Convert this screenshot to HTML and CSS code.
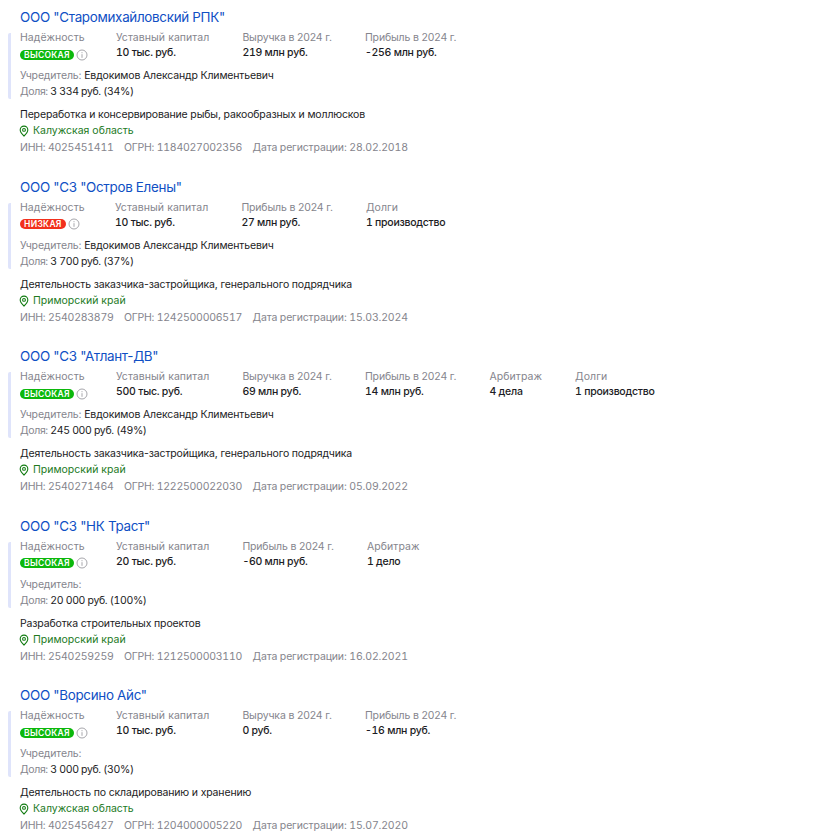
FILE: index.html
```html
<!DOCTYPE html>
<html lang="ru">
<head>
    <meta charset="UTF-8">
    <title>Связанные организации</title>
    <link rel="stylesheet" href="styles.css">
</head>
<body>
    <div class="company">
        <a class="company-title">ООО "Старомихайловский РПК"</a>
        <div class="details">
            <div class="stats">
                <div class="stat stat-rating"><div class="stat-label">Надёжность</div><div class="rating"><span class="badge badge-high">ВЫСОКАЯ</span><svg class="info" viewBox="0 0 12 12"><circle cx="6" cy="6" r="5"/><path d="M6 5.2v3.6M6 3.2v1"/></svg></div></div>
                <div class="stat"><div class="stat-label">Уставный капитал</div><div class="stat-value">10 тыс. руб.</div></div>
                <div class="stat"><div class="stat-label year-label">Выручка в 2024 г.</div><div class="stat-value">219 млн руб.</div></div>
                <div class="stat"><div class="stat-label year-label">Прибыль в 2024 г.</div><div class="stat-value">-256 млн руб.</div></div>
            </div>
            <div class="person"><span class="muted">Учредитель:</span> Евдокимов Александр Климентьевич</div>
            <div class="share"><span class="muted">Доля:</span> 3 334 руб. (34%)</div>
        </div>
        <div class="activity">Переработка и консервирование рыбы, ракообразных и моллюсков</div>
        <div class="region"><svg class="pin" viewBox="0 0 12 12"><path d="M6 11C4 9 2.2 7.2 2.2 4.9a3.8 3.8 0 0 1 7.6 0C9.8 7.2 8 9 6 11z"/><circle cx="6" cy="4.9" r="1.4"/></svg>Калужская область</div>
        <div class="ids"><span>ИНН: 4025451411</span><span>ОГРН: 1184027002356</span><span>Дата регистрации: 28.02.2018</span></div>
    </div>

    <div class="company">
        <a class="company-title">ООО "СЗ "Остров Елены"</a>
        <div class="details">
            <div class="stats">
                <div class="stat stat-rating stat-rating-low"><div class="stat-label">Надёжность</div><div class="rating"><span class="badge badge-low">НИЗКАЯ</span><svg class="info" viewBox="0 0 12 12"><circle cx="6" cy="6" r="5"/><path d="M6 5.2v3.6M6 3.2v1"/></svg></div></div>
                <div class="stat"><div class="stat-label">Уставный капитал</div><div class="stat-value">10 тыс. руб.</div></div>
                <div class="stat"><div class="stat-label year-label">Прибыль в 2024 г.</div><div class="stat-value">27 млн руб.</div></div>
                <div class="stat"><div class="stat-label">Долги</div><div class="stat-value">1 производство</div></div>
            </div>
            <div class="person"><span class="muted">Учредитель:</span> Евдокимов Александр Климентьевич</div>
            <div class="share"><span class="muted">Доля:</span> 3 700 руб. (37%)</div>
        </div>
        <div class="activity">Деятельность заказчика-застройщика, генерального подрядчика</div>
        <div class="region"><svg class="pin" viewBox="0 0 12 12"><path d="M6 11C4 9 2.2 7.2 2.2 4.9a3.8 3.8 0 0 1 7.6 0C9.8 7.2 8 9 6 11z"/><circle cx="6" cy="4.9" r="1.4"/></svg>Приморский край</div>
        <div class="ids"><span>ИНН: 2540283879</span><span>ОГРН: 1242500006517</span><span>Дата регистрации: 15.03.2024</span></div>
    </div>

    <div class="company">
        <a class="company-title">ООО "СЗ "Атлант-ДВ"</a>
        <div class="details">
            <div class="stats">
                <div class="stat stat-rating"><div class="stat-label">Надёжность</div><div class="rating"><span class="badge badge-high">ВЫСОКАЯ</span><svg class="info" viewBox="0 0 12 12"><circle cx="6" cy="6" r="5"/><path d="M6 5.2v3.6M6 3.2v1"/></svg></div></div>
                <div class="stat"><div class="stat-label">Уставный капитал</div><div class="stat-value">500 тыс. руб.</div></div>
                <div class="stat"><div class="stat-label year-label">Выручка в 2024 г.</div><div class="stat-value">69 млн руб.</div></div>
                <div class="stat"><div class="stat-label year-label">Прибыль в 2024 г.</div><div class="stat-value">14 млн руб.</div></div>
                <div class="stat"><div class="stat-label">Арбитраж</div><div class="stat-value">4 дела</div></div>
                <div class="stat"><div class="stat-label">Долги</div><div class="stat-value">1 производство</div></div>
            </div>
            <div class="person"><span class="muted">Учредитель:</span> Евдокимов Александр Климентьевич</div>
            <div class="share"><span class="muted">Доля:</span> 245 000 руб. (49%)</div>
        </div>
        <div class="activity">Деятельность заказчика-застройщика, генерального подрядчика</div>
        <div class="region"><svg class="pin" viewBox="0 0 12 12"><path d="M6 11C4 9 2.2 7.2 2.2 4.9a3.8 3.8 0 0 1 7.6 0C9.8 7.2 8 9 6 11z"/><circle cx="6" cy="4.9" r="1.4"/></svg>Приморский край</div>
        <div class="ids"><span>ИНН: 2540271464</span><span>ОГРН: 1222500022030</span><span>Дата регистрации: 05.09.2022</span></div>
    </div>

    <div class="company">
        <a class="company-title">ООО "СЗ "НК Траст"</a>
        <div class="details">
            <div class="stats">
                <div class="stat stat-rating"><div class="stat-label">Надёжность</div><div class="rating"><span class="badge badge-high">ВЫСОКАЯ</span><svg class="info" viewBox="0 0 12 12"><circle cx="6" cy="6" r="5"/><path d="M6 5.2v3.6M6 3.2v1"/></svg></div></div>
                <div class="stat"><div class="stat-label">Уставный капитал</div><div class="stat-value">20 тыс. руб.</div></div>
                <div class="stat"><div class="stat-label year-label">Прибыль в 2024 г.</div><div class="stat-value">-60 млн руб.</div></div>
                <div class="stat"><div class="stat-label">Арбитраж</div><div class="stat-value">1 дело</div></div>
            </div>
            <div class="person"><span class="muted">Учредитель:</span></div>
            <div class="share"><span class="muted">Доля:</span> 20 000 руб. (100%)</div>
        </div>
        <div class="activity">Разработка строительных проектов</div>
        <div class="region"><svg class="pin" viewBox="0 0 12 12"><path d="M6 11C4 9 2.2 7.2 2.2 4.9a3.8 3.8 0 0 1 7.6 0C9.8 7.2 8 9 6 11z"/><circle cx="6" cy="4.9" r="1.4"/></svg>Приморский край</div>
        <div class="ids"><span>ИНН: 2540259259</span><span>ОГРН: 1212500003110</span><span>Дата регистрации: 16.02.2021</span></div>
    </div>

    <div class="company">
        <a class="company-title">ООО "Ворсино Айс"</a>
        <div class="details">
            <div class="stats">
                <div class="stat stat-rating"><div class="stat-label">Надёжность</div><div class="rating"><span class="badge badge-high">ВЫСОКАЯ</span><svg class="info" viewBox="0 0 12 12"><circle cx="6" cy="6" r="5"/><path d="M6 5.2v3.6M6 3.2v1"/></svg></div></div>
                <div class="stat"><div class="stat-label">Уставный капитал</div><div class="stat-value">10 тыс. руб.</div></div>
                <div class="stat"><div class="stat-label year-label">Выручка в 2024 г.</div><div class="stat-value">0 руб.</div></div>
                <div class="stat"><div class="stat-label year-label">Прибыль в 2024 г.</div><div class="stat-value">-16 млн руб.</div></div>
            </div>
            <div class="person"><span class="muted">Учредитель:</span></div>
            <div class="share"><span class="muted">Доля:</span> 3 000 руб. (30%)</div>
        </div>
        <div class="activity">Деятельность по складированию и хранению</div>
        <div class="region"><svg class="pin" viewBox="0 0 12 12"><path d="M6 11C4 9 2.2 7.2 2.2 4.9a3.8 3.8 0 0 1 7.6 0C9.8 7.2 8 9 6 11z"/><circle cx="6" cy="4.9" r="1.4"/></svg>Калужская область</div>
        <div class="ids"><span>ИНН: 4025456427</span><span>ОГРН: 1204000005220</span><span>Дата регистрации: 15.07.2020</span></div>
    </div>
</body>
</html>
```
FILE: styles.css
```css
body {
    margin: 0;
    padding: 8px 8px 0;
    height: 831px;
    overflow: hidden;
    font-family: Inter, "Noto Sans", sans-serif;
    font-size: 10.5px;
    line-height: 16px;
    color: #1c1c24;
    background-color: #ffffff;
}
.company {
    height: 169.5px;
}
.company-title {
    display: block;
    margin-left: 12px;
    font-size: 13.4px;
    line-height: 19px;
    letter-spacing: -0.3px;
    color: #0f4fc4;
}
.details {
    display: flow-root;
    margin-top: 6px;
    padding-left: 9px;
    border-left: 3px solid #dfe4fb;
    border-radius: 2px;
    height: 66px;
}
.stats {
    display: flex;
    gap: 33px;
    height: 38px;
    margin-top: -3px;
}
.stat-rating {
    width: 63px;
}
.stat-rating-low {
    width: 62px;
}
.stat-label,
.muted,
.ids {
    color: #85858d;
}
.stat-label {
    line-height: 15px;
    letter-spacing: 0.06px;
}
.year-label {
    letter-spacing: -0.15px;
}
.stat-value {
    line-height: 15px;
    font-weight: 500;
    letter-spacing: -0.25px;
    font-variant-numeric: tabular-nums;
}
.rating {
    display: flex;
    align-items: center;
    gap: 2px;
    height: 15px;
    margin-top: 2px;
}
.badge {
    padding: 0 4px;
    border-radius: 6px;
    font-size: 8.5px;
    line-height: 10px;
    font-weight: 600;
    letter-spacing: 0.3px;
    white-space: nowrap;
    color: #ffffff;
}
.badge-high {
    background-color: #0cb80c;
}
.badge-low {
    background-color: #f2301d;
}
.info {
    flex-shrink: 0;
    width: 12px;
    height: 12px;
    fill: none;
    stroke: #9c9ca2;
    stroke-width: 0.9;
}
.person,
.activity {
    letter-spacing: -0.15px;
}
.share {
    letter-spacing: -0.35px;
    font-variant-numeric: tabular-nums;
}
.activity {
    margin: 8px 0 0 12px;
}
.region {
    display: flex;
    align-items: center;
    gap: 3px;
    margin-left: 10px;
    color: #227a1e;
}
.pin {
    width: 12px;
    height: 12px;
    fill: none;
    stroke: #0f7a0f;
    stroke-width: 1.1;
}
.ids {
    display: flex;
    gap: 10.5px;
    margin: 1px 0 0 12px;
    letter-spacing: -0.25px;
    font-variant-numeric: tabular-nums;
}
.ids span:last-child {
    letter-spacing: -0.15px;
}
```
